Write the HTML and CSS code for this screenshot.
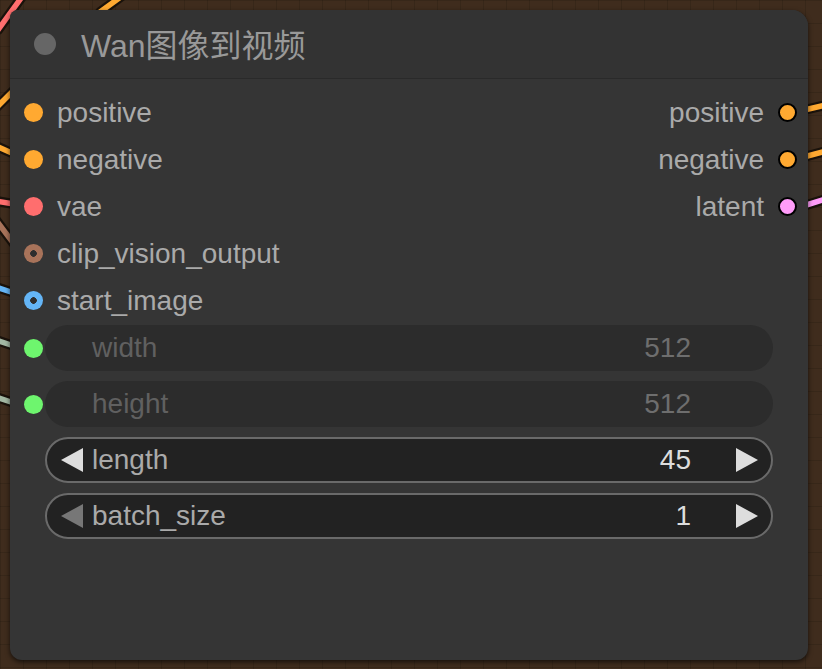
FILE: index.html
```html
<!DOCTYPE html>
<html lang="zh">
<head>
<meta charset="utf-8">
<title>Wan图像到视频</title>
<link rel="stylesheet" href="styles.css">
</head>
<body>
<div class="canvas">
  <svg class="wires" width="822" height="669" viewBox="0 0 822 669">
    <g fill="none" stroke="#1a120b" stroke-width="10" stroke-linecap="round">
      <path d="M-2 30 L24 -6"/>
      <path d="M100 12 L122 -4"/>
      <path d="M-4 108 L14 90"/>
      <path d="M-4 146 L14 154"/>
      <path d="M-4 201 L14 204"/>
      <path d="M-4 220 L14 244"/>
      <path d="M-4 287 L14 293"/>
      <path d="M-4 340 L14 346"/>
      <path d="M-4 397 L14 403"/>
      <path d="M800 111 L826 105"/>
      <path d="M800 158 L826 151"/>
      <path d="M800 207 L826 199"/>
    </g>
    <g fill="none" stroke-width="5.5" stroke-linecap="round">
      <path d="M-2 30 L24 -6" stroke="#ff6e6e"/>
      <path d="M100 12 L122 -4" stroke="#ffa931"/>
      <path d="M-4 108 L14 90" stroke="#ffa931"/>
      <path d="M-4 146 L14 154" stroke="#ffa931"/>
      <path d="M-4 201 L14 204" stroke="#ff6e6e"/>
      <path d="M-4 220 L14 244" stroke="#a8735a"/>
      <path d="M-4 287 L14 293" stroke="#64b5f6"/>
      <path d="M-4 340 L14 346" stroke="#a3b8a3"/>
      <path d="M-4 397 L14 403" stroke="#a3b8a3"/>
      <path d="M800 111 L826 105" stroke="#ffa931"/>
      <path d="M800 158 L826 151" stroke="#ffa931"/>
      <path d="M800 207 L826 199" stroke="#ff9cf9"/>
    </g>
  </svg>

  <div class="node">
    <div class="title">
      <span class="title-dot"></span>
      <span class="title-text">Wan图像到视频</span>
    </div>

    <div class="slots">
      <div class="row">
        <div class="in"><span class="dot c-orange"></span><span class="label">positive</span></div>
        <div class="out"><span class="label">positive</span><span class="dot outlined c-orange"></span></div>
      </div>
      <div class="row">
        <div class="in"><span class="dot c-orange"></span><span class="label">negative</span></div>
        <div class="out"><span class="label">negative</span><span class="dot outlined c-orange"></span></div>
      </div>
      <div class="row">
        <div class="in"><span class="dot c-red"></span><span class="label">vae</span></div>
        <div class="out"><span class="label">latent</span><span class="dot outlined c-pink"></span></div>
      </div>
      <div class="row">
        <div class="in"><span class="dot ring c-brown"></span><span class="label">clip_vision_output</span></div>
      </div>
      <div class="row">
        <div class="in"><span class="dot ring c-blue"></span><span class="label">start_image</span></div>
      </div>
    </div>

    <div class="widgets">
      <div class="wrow">
        <div class="wslot"><span class="dot c-green"></span></div>
        <div class="widget disabled">
          <span class="arrow left hidden"></span>
          <span class="wlabel">width</span>
          <span class="wvalue">512</span>
          <span class="arrow right hidden"></span>
        </div>
      </div>
      <div class="wrow">
        <div class="wslot"><span class="dot c-green"></span></div>
        <div class="widget disabled">
          <span class="arrow left hidden"></span>
          <span class="wlabel">height</span>
          <span class="wvalue">512</span>
          <span class="arrow right hidden"></span>
        </div>
      </div>
      <div class="wrow">
        <div class="wslot"></div>
        <div class="widget">
          <span class="arrow left"></span>
          <span class="wlabel">length</span>
          <span class="wvalue">45</span>
          <span class="arrow right"></span>
        </div>
      </div>
      <div class="wrow">
        <div class="wslot"></div>
        <div class="widget">
          <span class="arrow left dim"></span>
          <span class="wlabel">batch_size</span>
          <span class="wvalue">1</span>
          <span class="arrow right"></span>
        </div>
      </div>
    </div>
  </div>
</div>
</body>
</html>
```

FILE: styles.css
```css
html, body {
  margin: 0;
  padding: 0;
}

body {
  width: 822px;
  height: 669px;
  overflow: hidden;
  background-color: #3f2c1d;
  background-image:
    linear-gradient(to right, rgba(0, 0, 0, 0.12) 1px, transparent 1px),
    linear-gradient(to bottom, rgba(0, 0, 0, 0.12) 1px, transparent 1px);
  background-size: 23px 23px;
  font-family: "Liberation Sans", Arial, "Noto Sans CJK SC", sans-serif;
}

.canvas {
  position: relative;
  width: 822px;
  height: 669px;
  padding: 10px 0 0 10px;
  box-sizing: border-box;
}

.wires {
  position: absolute;
  left: 0;
  top: 0;
}

.node {
  position: relative;
  width: 798px;
  height: 650px;
  background: #353535;
  border-radius: 8px 16px 12px 12px;
  box-shadow: 0 2px 5px rgba(0, 0, 0, 0.65);
  display: flex;
  flex-direction: column;
  overflow: hidden;
}

.title {
  height: 69px;
  flex: none;
  box-sizing: border-box;
  padding-bottom: 3px;
  border-bottom: 1px solid #2a2a2a;
  background: #333333;
  display: flex;
  align-items: center;
  padding-left: 24px;
  gap: 25px;
}

.title-dot {
  width: 22px;
  height: 22px;
  border-radius: 50%;
  background: #666666;
  margin-top: 2px;
}

.title-text {
  font-size: 32px;
  color: #999999;
  font-family: "Liberation Sans", Arial, "Noto Sans CJK SC", sans-serif;
}

.slots {
  padding-top: 10px;
  display: flex;
  flex-direction: column;
}

.row {
  height: 47px;
  display: flex;
  align-items: center;
  justify-content: space-between;
  font-size: 28px;
  color: #aaaaaa;
}

.in {
  display: flex;
  align-items: center;
  gap: 14px;
  padding-left: 14px;
}

.out {
  display: flex;
  align-items: center;
  gap: 14px;
  padding-right: 11px;
  margin-left: auto;
}

.dot {
  display: block;
  width: 19px;
  height: 19px;
  border-radius: 50%;
  box-sizing: border-box;
  flex: none;
}

.dot.outlined {
  border: 2px solid #000000;
}

.c-orange { background: #ffa931; }
.c-red { background: #ff6e6e; }
.c-pink { background: #ff9cf9; }
.c-green { background: #6ef56e; }
.dot.ring.c-brown { background: radial-gradient(circle, #2e2e2e 0 3px, #a8735a 3.6px); }
.dot.ring.c-blue { background: radial-gradient(circle, #2e2e2e 0 3px, #64b5f6 3.6px); }

.widgets {
  margin-top: 1px;
  display: flex;
  flex-direction: column;
  gap: 10px;
}

.wrow {
  display: flex;
  align-items: center;
  height: 46px;
}

.wslot {
  width: 35px;
  flex: none;
  display: flex;
  align-items: center;
  padding-left: 14px;
  box-sizing: border-box;
}

.widget {
  width: 728px;
  height: 46px;
  box-sizing: border-box;
  border-radius: 23px;
  background: #222222;
  border: 2px solid #6a6a6a;
  display: flex;
  align-items: center;
  padding: 0 13px 0 14px;
  font-size: 28px;
}

.widget.disabled {
  background: #2c2c2c;
  border-color: transparent;
}

.arrow {
  width: 0;
  height: 0;
  border-top: 12px solid transparent;
  border-bottom: 12px solid transparent;
  flex: none;
}

.arrow.left {
  border-right: 22px solid #dddddd;
  margin-right: 9px;
}

.arrow.right {
  border-left: 22px solid #dddddd;
  margin-left: 45px;
}

.arrow.left.dim {
  border-right-color: #777777;
}

.arrow.hidden {
  visibility: hidden;
}

.wlabel {
  color: #aaaaaa;
  flex: 1;
}

.wvalue {
  color: #dddddd;
}

.widget.disabled .wlabel {
  color: #606060;
}

.widget.disabled .wvalue {
  color: #6e6e6e;
}
```
